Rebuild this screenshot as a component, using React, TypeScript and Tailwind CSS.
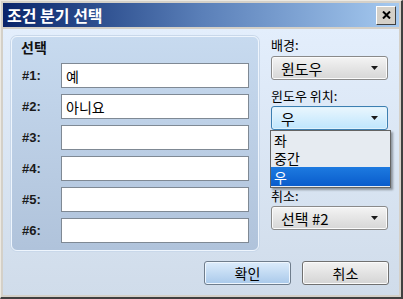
import React, { FC } from 'react';

const KR = { fontFamily: '"Noto Sans CJK KR", "Noto Sans", sans-serif' };
const NUM = { fontFamily: '"Liberation Sans", "Noto Sans CJK KR", sans-serif' };

const Arrow: FC = () => (
    <svg width="8" height="5" viewBox="0 0 8 5" className="shrink-0">
        <path d="M0 0 H7 L3.5 4 Z" fill="#1a1a1a" />
    </svg>
);

const Select: FC<{ value: string; focused?: boolean }> = ({ value, focused }) => (
    <div
        className={
            'flex h-[24px] w-[117px] items-center justify-between rounded-[3px] border pl-[9px] pr-[8px] ' +
            (focused
                ? 'border-[#3c7fb1] bg-gradient-to-b from-[#eaf6fd] to-[#bee6fd] shadow-[inset_0_0_0_1px_#dff2fc]'
                : 'border-[#8a8a8a] bg-gradient-to-b from-[#f4f4f4] to-[#d6d6d6] shadow-[inset_0_0_0_1px_#fbfbfb]')
        }
    >
        <span className="text-[15px] leading-none text-black" style={KR}>
            {value}
        </span>
        <Arrow />
    </div>
);

const Row: FC<{ label: string; value?: string }> = ({ label, value }) => (
    <div className="flex items-center">
        <span className="w-[40px] pl-[1px] text-[13px] font-bold text-[#1a1a1a]" style={NUM}>
            {label}
        </span>
        <div className="flex h-[25px] w-[188px] items-center border border-[#7f8994] bg-white pl-[4px]">
            <span className="text-[14px] leading-none text-black" style={KR}>
                {value}
            </span>
        </div>
    </div>
);

const App: FC = () => {
    const rows = [
        { label: '#1:', value: '예' },
        { label: '#2:', value: '아니요' },
        { label: '#3:' },
        { label: '#4:' },
        { label: '#5:' },
        { label: '#6:' },
    ];
    return (
        <div className="flex h-[299px] w-[403px] flex-col border-t-[1px] border-l-[1px] border-r-[2px] border-b-[2px] border-t-[#ece9e2] border-l-[#ece9e2] border-r-[#404040] border-b-[#404040] bg-[#d4d0c8] p-[2px]">
            {/* title bar */}
            <div className="flex h-[24px] items-center justify-between bg-gradient-to-r from-[#0a246a] via-[#5a7fb8] to-[#a6caf0] pl-[4px] pr-[3px]">
                <span className="text-[16px] font-bold leading-none text-white" style={KR}>
                    조건 분기 선택
                </span>
                <div className="flex h-[19px] w-[20px] items-center justify-center border-t border-l border-t-white border-l-white border-r border-b border-r-[#404040] border-b-[#404040] bg-[#d4d0c8]">
                    <svg width="9" height="8" viewBox="0 0 9 8">
                        <path d="M1 0.5 L8 7.5 M8 0.5 L1 7.5" stroke="#000" strokeWidth="2" />
                    </svg>
                </div>
            </div>

            {/* client area */}
            <div className="mt-[2px] flex flex-1 flex-col bg-gradient-to-b from-[#e3eefc] to-[#d0dcea] px-[8px] pt-[7px]">
                <div className="flex">
                    <div className="flex h-[215px] w-[248px] flex-col rounded-[6px] border border-[#eef5fd] bg-gradient-to-b from-[#c7daef] to-[#b0c3db] pl-[9px] pt-[1px] shadow-[0_0_0_1px_#c9d8ea]">
                        <span className="h-[25px] text-[14px] font-bold leading-[18px] text-[#111]" style={KR}>
                            선택
                        </span>
                        <div className="flex flex-col gap-[6px]">
                            {rows.map((r) => (
                                <Row key={r.label} label={r.label} value={r.value} />
                            ))}
                        </div>
                    </div>

                    <div className="relative ml-[12px] flex flex-col">
                        <span className="mt-[1px] h-[19px] text-[13px] leading-[16px] text-black" style={KR}>
                            배경:
                        </span>
                        <Select value="윈도우" />
                        <span className="mt-[8px] h-[18px] text-[13px] leading-[16px] text-black" style={KR}>
                            윈도우 위치:
                        </span>
                        <Select value="우" focused />
                        <span className="mt-[58px] h-[18px] text-[13px] leading-[16px] text-black" style={KR}>
                            취소:
                        </span>
                        <Select value="선택 #2" />

                        {/* open dropdown list */}
                        <div className="absolute left-[-1px] top-[94px] flex w-[121px] flex-col border border-[#646464] bg-[#e6ebf1] pb-[1px] shadow-[2px_2px_2px_rgba(0,0,0,0.35)]">
                            <span className="flex h-[18px] items-center pl-[3px] text-[14px] leading-none text-black" style={KR}>
                                좌
                            </span>
                            <span className="flex h-[18px] items-center pl-[3px] text-[14px] leading-none text-black" style={KR}>
                                중간
                            </span>
                            <span className="flex h-[19px] items-center bg-gradient-to-b from-[#1d7ae0] to-[#0a5ccc] pl-[3px] text-[14px] leading-none text-white" style={KR}>
                                우
                            </span>
                        </div>
                    </div>
                </div>

                <div className="mt-[10px] flex justify-end gap-[11px] pr-[2px]">
                    <div className="flex h-[24px] w-[87px] items-center justify-center rounded-[3px] border border-[#6f7d8c] bg-gradient-to-b from-[#dcecfb] to-[#a9c9ea] text-[14px] text-black shadow-[inset_0_0_0_1px_#eef6fe]" style={KR}>
                        확인
                    </div>
                    <div className="flex h-[24px] w-[87px] items-center justify-center rounded-[3px] border border-[#707070] bg-gradient-to-b from-[#f2f2f2] to-[#d4d4d4] text-[14px] text-black shadow-[inset_0_0_0_1px_#fbfbfb]" style={KR}>
                        취소
                    </div>
                </div>
            </div>
        </div>
    );
};

export default App;
